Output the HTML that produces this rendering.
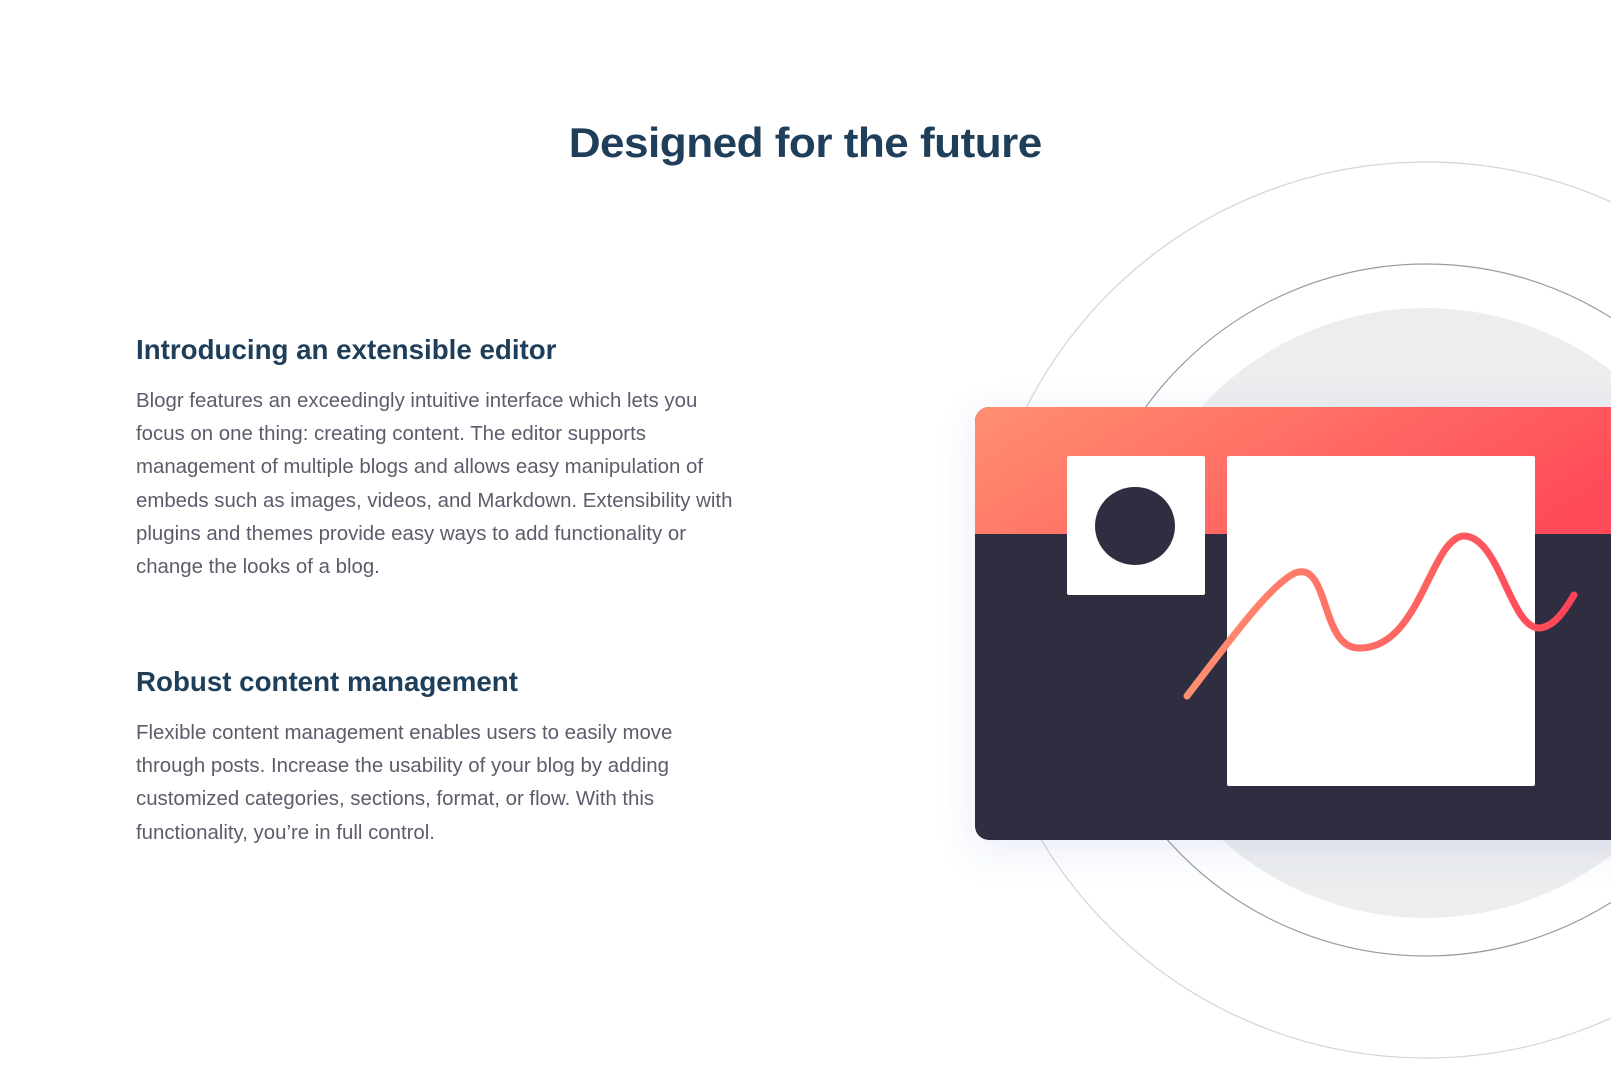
<!DOCTYPE html>
<html><head><meta charset="utf-8"><style>
html,body{margin:0;padding:0;background:#fff;width:1611px;height:1069px;overflow:hidden;position:relative;font-family:"Liberation Sans",sans-serif}
h1{position:absolute;left:0;width:1611px;top:113px;margin:0;text-align:center;font-size:42px;font-weight:bold;color:#1f3e5a;letter-spacing:-0.5px;line-height:60px}
h1 span{display:inline-block;transform:scaleX(1.05)}
h3{position:absolute;left:136px;margin:0;font-size:28px;font-weight:bold;color:#1f3e5a;line-height:34px;transform:scaleX(0.99);transform-origin:left}
p{position:absolute;left:136px;margin:0;font-size:20px;color:#5b5d6b;line-height:33.2px;white-space:nowrap;transform:scaleX(1.02);transform-origin:left}
svg{position:absolute;left:0;top:0}
</style></head><body>
<h1><span>Designed for the future</span></h1>
<h3 style="top:333px">Introducing an extensible editor</h3>
<p style="top:385px">Blogr features an exceedingly intuitive interface which lets you<br>focus on one thing: creating content. The editor supports<br>management of multiple blogs and allows easy manipulation of<br>embeds such as images, videos, and Markdown. Extensibility with<br>plugins and themes provide easy ways to add functionality or<br>change the looks of a blog.</p>
<h3 style="top:665px">Robust content management</h3>
<p style="top:717px">Flexible content management enables users to easily move<br>through posts. Increase the usability of your blog by adding<br>customized categories, sections, format, or flow. With this<br>functionality, you’re in full control.</p>
<svg width="1611" height="1069" viewBox="0 0 1611 1069">
<defs>
<linearGradient id="og" x1="0" y1="0" x2="1" y2="0.3"><stop offset="0" stop-color="#ff8f70"/><stop offset="1" stop-color="#ff4b59"/></linearGradient>
<linearGradient id="wg" x1="1187" y1="0" x2="1574" y2="0" gradientUnits="userSpaceOnUse"><stop offset="0" stop-color="#ff8f70"/><stop offset="1" stop-color="#ff4457"/></linearGradient>
<filter id="sh" x="-20%" y="-20%" width="140%" height="150%"><feDropShadow dx="0" dy="10" stdDeviation="18" flood-color="#5064c8" flood-opacity="0.12"/></filter>
<clipPath id="cc"><rect x="975" y="407" width="700" height="433" rx="14"/></clipPath>
</defs>
<circle cx="1426" cy="610" r="448" fill="none" stroke="#d4d4d8" stroke-width="1.2"/>
<circle cx="1426" cy="610" r="346" fill="none" stroke="#9a9aa4" stroke-width="1.2"/>
<circle cx="1426" cy="613" r="305" fill="#ededef"/>
<rect x="975" y="407" width="700" height="433" rx="14" fill="#2e2e40" filter="url(#sh)"/>
<g clip-path="url(#cc)"><rect x="975" y="407" width="700" height="127" fill="url(#og)"/></g>
<rect x="1067" y="456" width="138" height="139" rx="2" fill="#fff"/>
<ellipse cx="1135" cy="526" rx="40" ry="39" fill="#2e2e40"/>
<rect x="1227" y="456" width="308" height="330" rx="2" fill="#fff"/>
<path d="M1187 696 C1230 640 1270 585 1295 573 C1330 560 1320 650 1360 648 C1420 648 1430 540 1463 536 C1500 535 1510 630 1540 628 C1555 626 1565 610 1574 595" fill="none" stroke="url(#wg)" stroke-width="7" stroke-linecap="round"/>
</svg>
</body></html>
